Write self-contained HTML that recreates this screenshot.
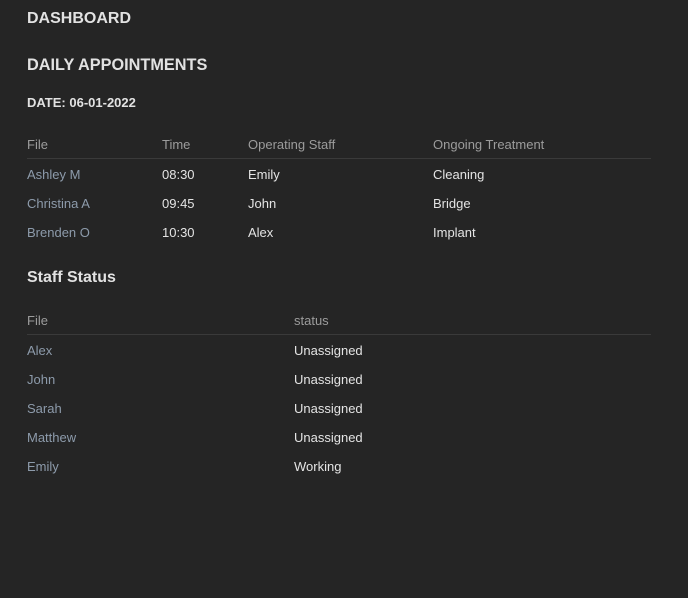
<!DOCTYPE html>
<html><head><style>
body{margin:0;background:#252525;width:688px;height:598px;font-family:"Liberation Sans",sans-serif;position:relative;overflow:hidden}
.t{position:absolute;white-space:nowrap;line-height:1}
.h{color:#e2e2e2;font-weight:bold}
.hd{color:#9c9c9c;font-size:13px}
.f{color:#8d9bab;font-size:13px}
.v{color:#e4e4e4;font-size:13px}
.line{position:absolute;left:27px;width:624px;height:1px;background:#3a3a3a}
</style></head><body>
<div class="t h" style="left:27px;top:11px;font-size:16px">DASHBOARD</div>
<div class="t h" style="left:27px;top:57px;font-size:16.3px">DAILY APPOINTMENTS</div>
<div class="t h" style="left:27px;top:96px;font-size:13px">DATE: 06-01-2022</div>

<div class="t hd" style="left:27px;top:138px">File</div>
<div class="t hd" style="left:162px;top:138px">Time</div>
<div class="t hd" style="left:248px;top:138px">Operating Staff</div>
<div class="t hd" style="left:433px;top:138px">Ongoing Treatment</div>
<div class="line" style="top:158px"></div>

<div class="t f" style="left:27px;top:168px">Ashley M</div>
<div class="t v" style="left:162px;top:168px">08:30</div>
<div class="t v" style="left:248px;top:168px">Emily</div>
<div class="t v" style="left:433px;top:168px">Cleaning</div>
<div class="t f" style="left:27px;top:197px">Christina A</div>
<div class="t v" style="left:162px;top:197px">09:45</div>
<div class="t v" style="left:248px;top:197px">John</div>
<div class="t v" style="left:433px;top:197px">Bridge</div>
<div class="t f" style="left:27px;top:226px">Brenden O</div>
<div class="t v" style="left:162px;top:226px">10:30</div>
<div class="t v" style="left:248px;top:226px">Alex</div>
<div class="t v" style="left:433px;top:226px">Implant</div>

<div class="t h" style="left:27px;top:270px;font-size:16px">Staff Status</div>
<div class="t hd" style="left:27px;top:314px">File</div>
<div class="t hd" style="left:294px;top:314px">status</div>
<div class="line" style="top:334px"></div>

<div class="t f" style="left:27px;top:344px">Alex</div>
<div class="t v" style="left:294px;top:344px">Unassigned</div>
<div class="t f" style="left:27px;top:373px">John</div>
<div class="t v" style="left:294px;top:373px">Unassigned</div>
<div class="t f" style="left:27px;top:402px">Sarah</div>
<div class="t v" style="left:294px;top:402px">Unassigned</div>
<div class="t f" style="left:27px;top:431px">Matthew</div>
<div class="t v" style="left:294px;top:431px">Unassigned</div>
<div class="t f" style="left:27px;top:460px">Emily</div>
<div class="t v" style="left:294px;top:460px">Working</div>
</body></html>
